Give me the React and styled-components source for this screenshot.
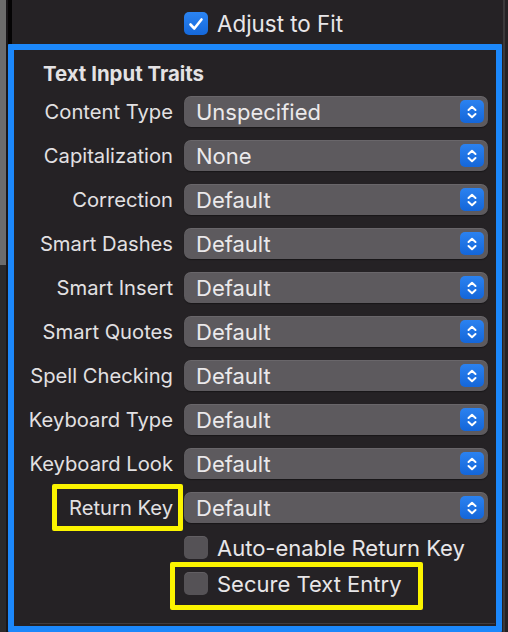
import styled, { createGlobalStyle } from 'styled-components';

const GlobalStyle = createGlobalStyle`
  html, body {
    margin: 0;
    padding: 0;
    background: #252225;
  }
  body {
    font-family: Inter, "Liberation Sans", sans-serif;
    -webkit-font-smoothing: antialiased;
  }
`;

const Window = styled.div`
  display: flex;
  width: 508px;
  height: 632px;
  overflow: hidden;
  background: #252225;
`;

const ScrollTrack = styled.div`
  display: flex;
  flex-direction: column;
  width: 6px;
  background: #2b2a2b;
`;

const ScrollThumb = styled.div`
  height: 265px;
  background: #6c6c6c;
`;

const Divider = styled.div`
  width: 2px;
  background: #19171a;
`;

const Panel = styled.div`
  flex: 1;
  display: flex;
  flex-direction: column;
  min-width: 0;
`;

const RightEdge = styled.div`
  display: flex;
  width: 11px;
  margin-left: -5px;
  background: #252225;

  &::before {
    content: '';
    width: 6px;
  }
  &::after {
    content: '';
    width: 2px;
    background: #3b393b;
  }
`;

const TopRow = styled.div`
  height: 44px;
  display: flex;
  align-items: flex-start;
  padding: 12px 0 0 172px;
  box-sizing: border-box;
  border-left: 4px solid #050405;
`;

const Section = styled.div`
  flex: 1;
  border: 6px solid #1c88fb;
  border-radius: 1px;
  padding: 5px 0 0 0;
  display: flex;
  flex-direction: column;
  position: relative;

  &::after {
    content: '';
    position: absolute;
    left: 16px;
    right: 1px;
    bottom: 2px;
    height: 1px;
    background: #403d40;
  }
`;

const Heading = styled.div`
  font-weight: 700;
  font-size: 20.4px;
  color: #e4e2e4;
  padding-left: 29px;
  height: 37px;
  line-height: 37px;
`;

const Rows = styled.div`
  display: flex;
  flex-direction: column;
  gap: 13px;
  padding-top: 4px;
`;

const Row = styled.div`
  display: grid;
  grid-template-columns: 159px 304px;
  column-gap: 11px;
  align-items: center;
  height: 31px;
  position: relative;
`;

const Label = styled.div`
  text-align: right;
  font-size: 20.2px;
  color: #e2e0e2;
  white-space: nowrap;
`;

const Popup = styled.div`
  height: 31px;
  box-sizing: border-box;
  border-radius: 7px;
  background: #5d5a5e;
  box-shadow: inset 0 1px 0 rgba(255, 255, 255, 0.08), 0 1px 1px rgba(0, 0, 0, 0.35);
  display: flex;
  align-items: center;
  justify-content: space-between;
  padding: 0 4px 0 12px;
  font-size: 22px;
  color: #ebe9eb;
`;

const Stepper = styled.div`
  width: 24px;
  height: 23px;
  border-radius: 5px;
  background: linear-gradient(#2b82f0, #1466d9);
  display: flex;
  align-items: center;
  justify-content: center;
`;

const Checks = styled.div`
  display: flex;
  flex-direction: column;
  gap: 13px;
  padding: 13px 0 0 170px;
`;

const CheckRow = styled.div`
  display: flex;
  align-items: center;
  gap: 9px;
  height: 23px;
  font-size: 22px;
  color: #e8e6e8;
  white-space: nowrap;
`;

const TopCheckRow = styled(CheckRow)`
  font-size: 22.4px;
`;

const Box = styled.div`
  width: 24px;
  height: 23px;
  flex-shrink: 0;
  box-sizing: border-box;
  border-radius: 5px;
  display: flex;
  align-items: center;
  justify-content: center;
  background: ${(p) => (p.checked ? 'linear-gradient(#2b84f2, #1568da)' : '#555256')};
  box-shadow: ${(p) => (p.checked ? 'none' : 'inset 0 1px 0 rgba(255,255,255,0.08)')};
`;

const Highlight = styled.div`
  position: absolute;
  box-sizing: border-box;
  border: 5px solid #fbf400;
  border-radius: 2px;
  pointer-events: none;
`;

const ArrowIcon = () => (
  <svg width="12" height="16" viewBox="0 0 12 16">
    <path
      d="M2.5 6 L6 2.8 L9.5 6 M2.5 10 L6 13.2 L9.5 10"
      fill="none"
      stroke="#fff"
      strokeWidth="2"
      strokeLinecap="round"
      strokeLinejoin="round"
    />
  </svg>
);

const CheckIcon = () => (
  <svg width="16" height="14" viewBox="0 0 16 14">
    <path
      d="M2.5 7.5 L6.3 11.5 L13.5 2.5"
      fill="none"
      stroke="#fff"
      strokeWidth="2.6"
      strokeLinecap="round"
      strokeLinejoin="round"
    />
  </svg>
);

const rows = [
  ['Content Type', 'Unspecified'],
  ['Capitalization', 'None'],
  ['Correction', 'Default'],
  ['Smart Dashes', 'Default'],
  ['Smart Insert', 'Default'],
  ['Smart Quotes', 'Default'],
  ['Spell Checking', 'Default'],
  ['Keyboard Type', 'Default'],
  ['Keyboard Look', 'Default'],
  ['Return Key', 'Default'],
];

const Checkbox = ({ checked, children, as }) => (
  <CheckRow as={as}>
    <Box checked={checked}>{checked && <CheckIcon />}</Box>
    {children}
  </CheckRow>
);

const App = () => {
  return (
    <>
      <GlobalStyle />
      <Window>
        <ScrollTrack>
          <ScrollThumb />
        </ScrollTrack>
        <Divider />
        <Panel>
          <TopRow>
            <Checkbox checked as={TopCheckRow}>
              Adjust to Fit
            </Checkbox>
          </TopRow>
          <Section>
            <Heading>Text Input Traits</Heading>
            <Rows>
              {rows.map(([label, value]) => (
                <Row key={label}>
                  <Label>{label}</Label>
                  <Popup>
                    {value}
                    <Stepper>
                      <ArrowIcon />
                    </Stepper>
                  </Popup>
                  {label === 'Return Key' && (
                    <Highlight style={{ left: 38, top: -8, width: 131, height: 47 }} />
                  )}
                </Row>
              ))}
            </Rows>
            <Checks>
              <Checkbox>Auto-enable Return Key</Checkbox>
              <Checkbox>Secure Text Entry</Checkbox>
            </Checks>
            <Highlight style={{ left: 156, top: 512, width: 253, height: 48 }} />
          </Section>
        </Panel>
        <RightEdge />
      </Window>
    </>
  );
};

export default App;
